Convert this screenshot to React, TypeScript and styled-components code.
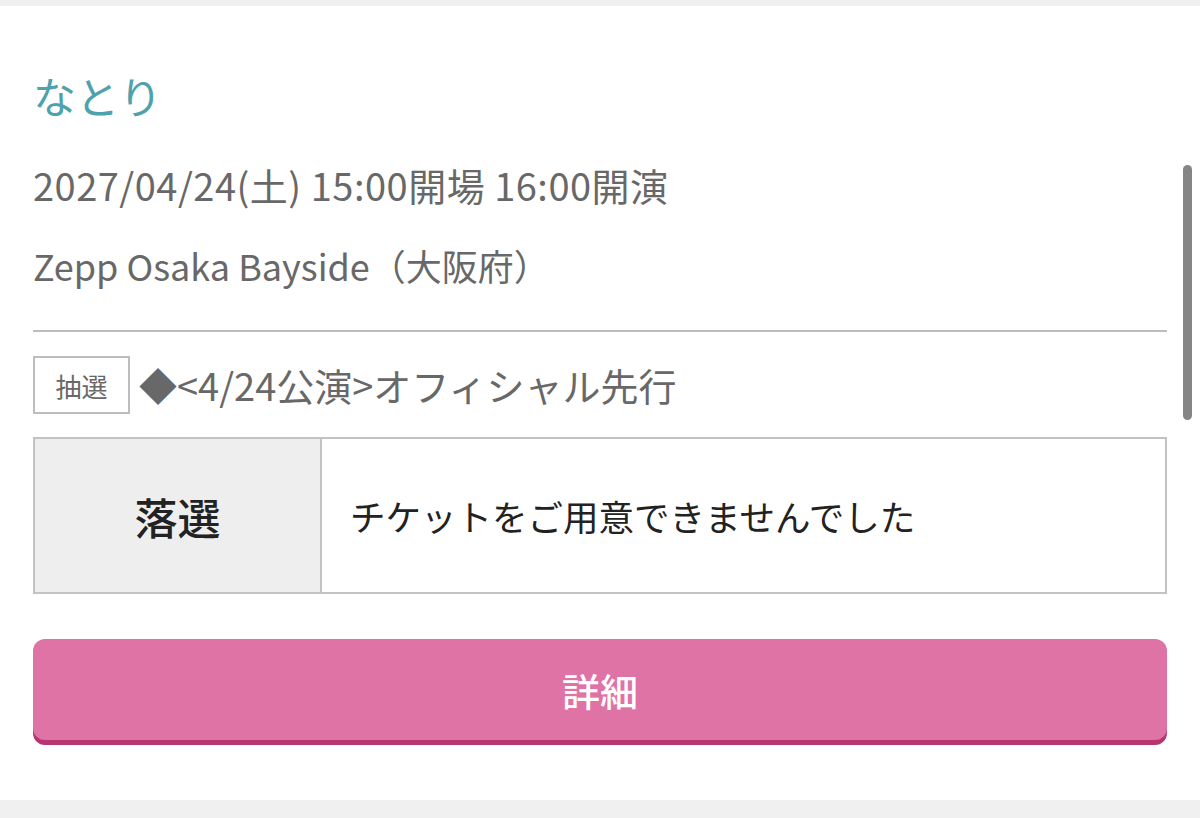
import React from "react";
import styled, { createGlobalStyle } from "styled-components";

const GlobalStyle = createGlobalStyle`
    html, body {
        margin: 0;
        padding: 0;
        background: #ffffff;
    }
    body {
        font-family: "Noto Sans CJK JP", "Noto Sans", sans-serif;
        overflow: hidden;
    }
`;

const Page = styled.div`
    position: relative;
    width: 1200px;
    height: 818px;
    display: flex;
    flex-direction: column;
    background: #ffffff;
`;

const Band = styled.div<{ $h: number }>`
    height: ${(p) => p.$h}px;
    background: #f0f0f0;
    flex-shrink: 0;
`;

const Card = styled.section`
    flex: 1;
    padding: 59px 33px 0;
    display: flex;
    flex-direction: column;
`;

const Artist = styled.h2`
    margin: 0;
    font-size: 43px;
    line-height: 60px;
    font-weight: 400;
    color: #4ea2ad;
`;

const Info = styled.p<{ $size: number; $spacing: number }>`
    margin: 40px 0 0;
    font-size: ${(p) => p.$size}px;
    letter-spacing: ${(p) => p.$spacing}px;
    line-height: 40px;
    font-weight: 400;
    color: #686868;
`;

const Divider = styled.hr`
    margin: 45px 0 0;
    border: none;
    height: 2px;
    background: #bdbdbd;
`;

const SaleRow = styled.div`
    margin-top: 24px;
    display: flex;
    align-items: center;
    gap: 9px;
`;

const Tag = styled.span`
    box-sizing: border-box;
    width: 97px;
    height: 58px;
    border: 2px solid #bdbdbd;
    display: flex;
    align-items: center;
    justify-content: center;
    font-size: 26px;
    color: #686868;
`;

const SaleName = styled.span`
    font-size: 38px;
    line-height: 40px;
    color: #686868;
`;

const Result = styled.div`
    margin-top: 23px;
    box-sizing: border-box;
    height: 157px;
    border: 2px solid #c2c2c2;
    display: grid;
    grid-template-columns: 287px 1fr;
`;

const Status = styled.div`
    background: #eeeeee;
    border-right: 2px solid #c2c2c2;
    display: flex;
    align-items: center;
    justify-content: center;
    font-size: 43px;
    font-weight: 500;
    color: #222222;
`;

const Message = styled.div`
    display: flex;
    align-items: center;
    padding-left: 28px;
    font-size: 35.5px;
    color: #222222;
`;

const DetailButton = styled.button`
    margin-top: 45px;
    height: 101px;
    border: none;
    border-radius: 12px;
    background: #df73a6;
    box-shadow: 0 5px 0 #b63570;
    color: #ffffff;
    font-family: inherit;
    font-size: 38px;
    font-weight: 500;
    cursor: pointer;
`;

const Scrollbar = styled.div`
    position: absolute;
    right: 8px;
    top: 165px;
    width: 9px;
    height: 255px;
    border-radius: 5px;
    background: #858585;
`;

export default function App() {
    return (
        <>
            <GlobalStyle />
            <Page>
                <Band $h={6} />
                <Card>
                    <Artist>なとり</Artist>
                    <Info $size={38} $spacing={0.5}>
                        2027/04/24(土) 15:00開場 16:00開演
                    </Info>
                    <Info $size={36} $spacing={0}>
                        Zepp Osaka Bayside（大阪府）
                    </Info>
                    <Divider />
                    <SaleRow>
                        <Tag>抽選</Tag>
                        <SaleName>◆&lt;4/24公演&gt;オフィシャル先行</SaleName>
                    </SaleRow>
                    <Result>
                        <Status>落選</Status>
                        <Message>チケットをご用意できませんでした</Message>
                    </Result>
                    <DetailButton>詳細</DetailButton>
                </Card>
                <Band $h={18} />
                <Scrollbar />
            </Page>
        </>
    );
}
